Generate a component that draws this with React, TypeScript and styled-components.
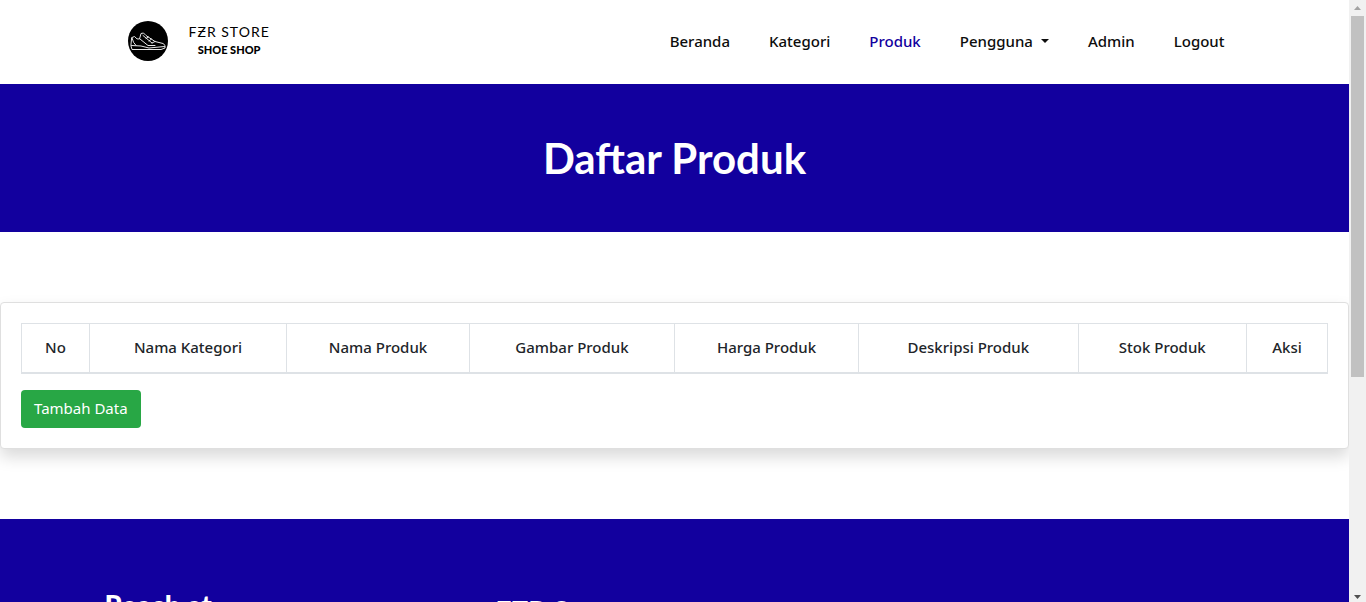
import React from "react";
import styled, { createGlobalStyle } from "styled-components";

const BLUE = "#12009e";

const GlobalStyle = createGlobalStyle`
  *, *::before, *::after { box-sizing: border-box; }
  body {
    margin: 0;
    background: #fff;
    color: #212529;
    font-family: "Noto Sans", "Open Sans", sans-serif;
    font-size: 15px;
    line-height: 24px;
  }
`;

const Viewport = styled.div`
  display: grid;
  grid-template-columns: minmax(0, 1fr) 17px;
  height: 100vh;
  overflow: hidden;
`;

const Page = styled.div`
  overflow: hidden;
`;

const Container = styled.div`
  width: 100%;
  max-width: 1140px;
  margin: 0 auto;
`;

const Header = styled.header`
  background: #fff;
`;

const HeaderRow = styled(Container)`
  display: flex;
  align-items: center;
  justify-content: space-between;
  height: 84px;
  padding: 0 20px 2px 23px;
`;

const Brand = styled.a`
  display: flex;
  align-items: center;
  gap: 21px;
  color: #000;
  text-decoration: none;
`;

const BrandText = styled.span`
  display: flex;
  flex-direction: column;
  align-items: center;
`;

const BrandName = styled.span`
  font-family: Lato, sans-serif;
  font-size: 14px;
  line-height: 18px;
  letter-spacing: 1px;
`;

const BrandTag = styled.span`
  font-family: Lato, sans-serif;
  font-size: 11px;
  font-weight: 900;
  line-height: 18px;
`;

const Nav = styled.nav`
  display: flex;
  gap: 39px;
`;

const NavLink = styled.a<{ $active?: boolean }>`
  display: flex;
  align-items: center;
  gap: 8px;
  color: ${(p) => (p.$active ? BLUE : "#0d0d0d")};
  font-weight: 500;
  text-decoration: none;
`;

const Caret = styled.span`
  border: 4px solid transparent;
  border-top-color: currentColor;
  border-bottom: 0;
`;

const Banner = styled.section`
  padding: 44px 0;
  background: ${BLUE};
  text-align: center;
`;

const Title = styled.h1`
  margin: 0;
  color: #fff;
  font-family: Lato, sans-serif;
  font-size: 42px;
  font-weight: 700;
  line-height: 60px;
`;

const Card = styled.main`
  margin: 70px 0;
  padding: 20px;
  border: 1px solid #dfdfdf;
  border-radius: 4px;
  background: #fff;
  box-shadow: 0 8px 16px rgba(0, 0, 0, 0.15);
`;

const Table = styled.table`
  width: 100%;
  margin-bottom: 16px;
  border-collapse: collapse;
  table-layout: fixed;
`;

const Th = styled.th<{ $share: number }>`
  width: ${(p) => p.$share}%;
  padding: 11px 0 13px;
  border: 1px solid #dee2e6;
  border-bottom-width: 2px;
  font-weight: 500;
  text-align: center;
  white-space: nowrap;
`;

const AddButton = styled.button`
  display: block;
  height: 38px;
  padding: 0 13px 2px;
  border: 0;
  border-radius: 4px;
  background: #28a745;
  color: #fff;
  font: inherit;
`;

const Footer = styled.footer`
  padding: 70px 0;
  background: ${BLUE};
  color: #fff;
`;

const FooterGrid = styled(Container)`
  display: grid;
  grid-template-columns: 391px 1fr;
`;

const FooterTitle = styled.h2`
  margin: 0;
  font-family: Lato, sans-serif;
  font-size: 28px;
  font-weight: 900;
  line-height: 32px;
`;

const FooterBrand = styled(FooterTitle)`
  padding-top: 6px;
`;

const ScrollTrack = styled.div`
  display: flex;
  flex-direction: column;
  align-items: center;
  background: #f1f1f1;
`;

const ScrollThumb = styled.div`
  width: 13px;
  height: 60%;
  background: #c1c1c1;
`;

const ScrollArrow = styled.svg`
  display: block;
  flex: none;
  width: 17px;
  height: 16px;
  &:last-child { margin-top: auto; height: 12px; }
`;

const columns = [
  { label: "No", share: 5.2 },
  { label: "Nama Kategori", share: 15.1 },
  { label: "Nama Produk", share: 14 },
  { label: "Gambar Produk", share: 15.7 },
  { label: "Harga Produk", share: 14.1 },
  { label: "Deskripsi Produk", share: 16.8 },
  { label: "Stok Produk", share: 12.9 },
  { label: "Aksi", share: 6.2 },
];

const links = ["Beranda", "Kategori", "Produk", "Pengguna", "Admin", "Logout"];

function ShoeLogo() {
  return (
    <svg width="40" height="40" viewBox="0 0 40 40" aria-hidden="true">
      <circle cx="20" cy="20" r="20" fill="#000" />
      <g fill="none" stroke="#e8e8e8" strokeWidth="1" strokeLinejoin="round" strokeLinecap="round">
        <path d="M4 16.500 6.500 15.500Q9 19 11.500 18L13 12.500 15.500 12 18 14.500 27 20.500 35 22.500Q38 24 37 27L33 28.500H4L3 25Z" />
        <path d="M3.500 24.500 13 25 21 27 36.500 25.500M4 17Q5 22 8 24.500M12 18 20 24.500 27 24.500M15 14.500 24 22M18 17.500 20.500 16M21 20 23.500 18M24 22 27 20.500" />
      </g>
    </svg>
  );
}

export default function App() {
  return (
    <>
      <GlobalStyle />
      <Viewport>
        <Page>
          <Header>
            <HeaderRow>
              <Brand href="#">
                <ShoeLogo />
                <BrandText>
                  <BrandName>FƵR STORE</BrandName>
                  <BrandTag>SHOE SHOP</BrandTag>
                </BrandText>
              </Brand>
              <Nav>
                {links.map((label) => (
                  <NavLink key={label} href="#" $active={label === "Produk"}>
                    {label}
                    {label === "Pengguna" && <Caret />}
                  </NavLink>
                ))}
              </Nav>
            </HeaderRow>
          </Header>
          <Banner>
            <Title>Daftar Produk</Title>
          </Banner>
          <Card>
            <Table>
              <thead>
                <tr>
                  {columns.map((c) => (
                    <Th key={c.label} scope="col" $share={c.share}>
                      {c.label}
                    </Th>
                  ))}
                </tr>
              </thead>
            </Table>
            <AddButton type="button">Tambah Data</AddButton>
          </Card>
          <Footer>
            <FooterGrid>
              <FooterTitle>Reach at</FooterTitle>
              <FooterBrand>FZR Store</FooterBrand>
            </FooterGrid>
          </Footer>
        </Page>
        <ScrollTrack aria-hidden="true">
          <ScrollArrow viewBox="0 0 17 16">
            <path d="M5 10 8.500 6 12 10Z" fill="#a3a3a3" />
          </ScrollArrow>
          <ScrollThumb />
          <ScrollArrow viewBox="0 0 17 12">
            <path d="M5 5 8.500 9 12 5Z" fill="#505050" />
          </ScrollArrow>
        </ScrollTrack>
      </Viewport>
    </>
  );
}
